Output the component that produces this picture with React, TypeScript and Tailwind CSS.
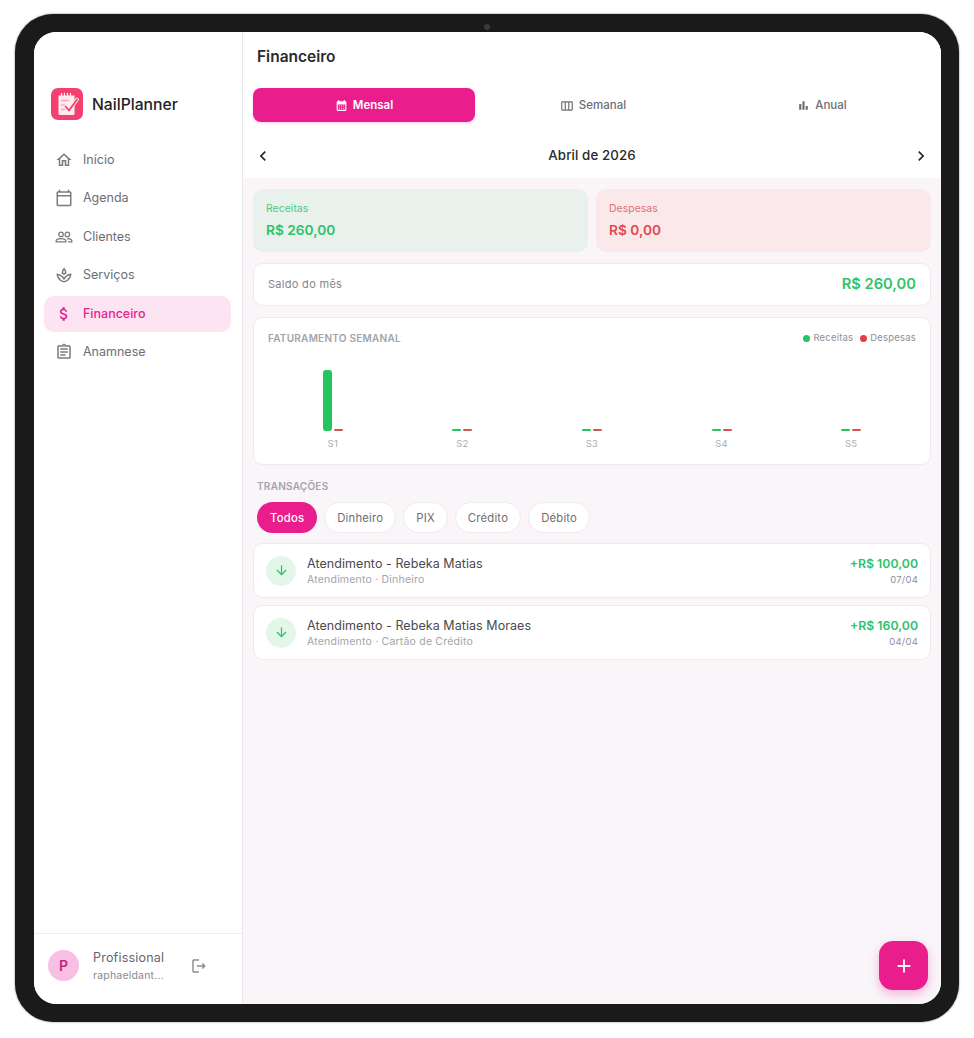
import { MdOutlineHome, MdOutlineCalendarToday, MdOutlineSpa, MdAttachMoney, MdOutlineAssignment, MdOutlineLogout, MdChevronLeft, MdChevronRight, MdCalendarMonth, MdOutlineViewWeek, MdBarChart, MdArrowDownward, MdAdd } from "react-icons/md";

function TwoPeople({ size, className }: { size: number; className?: string }) {
  return (
    <svg width={size} height={size} viewBox="0 0 24 24" fill="none" stroke="currentColor" strokeWidth="1.7" strokeLinejoin="round" className={className}>
      <circle cx="8" cy="8.5" r="3" />
      <circle cx="16.5" cy="8.5" r="3" />
      <path d="M1.5 18.5v-1c0-2 3-3.2 6.5-3.2s6.5 1.2 6.5 3.2v1z" />
      <path d="M16 14.3c3.500 0 6.500 1.200 6.500 3.200v1h-5" />
    </svg>
  );
}

const nav = [
  { label: "Início", Icon: MdOutlineHome },
  { label: "Agenda", Icon: MdOutlineCalendarToday },
  { label: "Clientes", Icon: TwoPeople },
  { label: "Serviços", Icon: MdOutlineSpa },
  { label: "Financeiro", Icon: MdAttachMoney, active: true },
  { label: "Anamnese", Icon: MdOutlineAssignment },
];

const chips = ["Todos", "Dinheiro", "PIX", "Crédito", "Débito"];

const weeks = [
  { label: "S1", h: 61 },
  { label: "S2", h: 2 },
  { label: "S3", h: 2 },
  { label: "S4", h: 2 },
  { label: "S5", h: 2 },
];

const rows = [
  { title: "Atendimento - Rebeka Matias", sub: "Atendimento · Dinheiro", value: "+R$ 100,00", date: "07/04" },
  { title: "Atendimento - Rebeka Matias Moraes", sub: "Atendimento · Cartão de Crédito", value: "+R$ 160,00", date: "04/04" },
];

function Logo() {
  return (
    <svg width="32" height="32" viewBox="0 0 32 32" className="shrink-0">
      <rect width="32" height="32" rx="7" fill="#f4406f" />
      <path d="M7.500 7.500h16V25.500a1.500 1.500 0 0 1-1.500 1.500H9a1.500 1.500 0 0 1-1.500-1.500z" fill="#fdebf0" />
      <path d="M10.500 5.500v3.500M13.500 5.500v3.500M16.500 5.500v3.500M19.500 5.500v3.500" stroke="#fdebf0" strokeWidth="1.300" strokeLinecap="round" />
      <path d="M10.500 12.500h7M10.500 17h3M10.500 21.500h3" stroke="#f8a5ba" strokeWidth="1.500" strokeLinecap="round" />
      <path d="M14.500 18.500l3.500 4 8-11" stroke="#fdebf0" strokeWidth="3.800" fill="none" strokeLinecap="round" strokeLinejoin="round" />
      <path d="M14.500 18.500l3.500 4 8-11" stroke="#f4406f" strokeWidth="1.800" fill="none" strokeLinecap="round" strokeLinejoin="round" />
    </svg>
  );
}

export default function App() {
  return (
    <div className="w-[974px] h-[1038px] bg-white pl-[15px] pt-[14px] font-['Inter',sans-serif]">
      <div className="relative w-[944px] h-[1008px] bg-[#1a1a1a] rounded-[38px] pl-[19px] pr-[18px] pt-[18px] pb-[18px] shadow-[0_0_2px_rgba(0,0,0,0.6)]">
        <div className="absolute top-[10px] left-[469px] w-[6px] h-[6px] rounded-full bg-[#3a3a3a]" />
        <div className="flex w-full h-full rounded-[22px] overflow-hidden bg-white">
          <aside className="w-[209px] shrink-0 flex flex-col border-r border-[#e9e9ec] bg-white">
            <div className="flex items-center gap-[9px] pl-[17px] pt-[56px]">
              <Logo />
              <span className="text-[15.7px] font-medium text-[#222226] leading-none pt-[1px]">NailPlanner</span>
            </div>
            <nav className="flex flex-col gap-[3px] pl-[10px] pr-[11px] pt-[22px]">
              {nav.map(({ label, Icon, active }) => (
                <div key={label} className={`flex items-center h-[35.500px] rounded-[10px] pl-[11px] gap-[10px] ${active ? "bg-[#fce4f3] text-[#e91e8c] font-medium" : "text-[#6d6d75]"}`}>
                  <Icon size={18} className={active ? "shrink-0" : "shrink-0 text-[#7a7a82]"} />
                  <span className="text-[12.500px] pt-[1px]">{label}</span>
                </div>
              ))}
            </nav>
            <div className="mt-auto h-[71px] border-t border-[#ececef] flex items-center pl-[14px] pb-[7px] gap-[14px]">
              <div className="w-[31px] h-[31px] rounded-full bg-[#f7bfe2] flex items-center justify-center text-[#c2277f] text-[14px] font-semibold">P</div>
              <div className="w-[72px]">
                <div className="text-[12.500px] text-[#66666e] leading-[17px] tracking-[0.2px] whitespace-nowrap">Profissional</div>
                <div className="text-[10.500px] text-[#8a8a92] leading-[15px] mt-[2px] tracking-[0.2px] whitespace-nowrap">raphaeldant...</div>
              </div>
              <MdOutlineLogout size={18} className="text-[#8f8f97] ml-[11px]" />
            </div>
          </aside>
          <main className="relative flex-1 flex flex-col bg-[#f9f5f9] min-w-0">
            <div className="bg-white h-[146px] shrink-0 flex flex-col">
              <div className="h-[50px] pl-[14px] flex items-center shrink-0">
                <h1 className="text-[15.500px] font-semibold text-[#2a2a2e]">Financeiro</h1>
              </div>
              <div className="flex gap-[7px] pl-[10px] mt-[6px] h-[34px] shrink-0">
                <div className="w-[222px] shrink-0 rounded-[8px] bg-[#e91e8c] text-white flex items-center justify-center gap-[5px] text-[11.500px] font-semibold pt-[1px] shadow-[0_1px_3px_rgba(233,30,140,0.25)]">
                  <MdCalendarMonth size={13} /> Mensal
                </div>
                <div className="w-[222px] shrink-0 text-[#6d6d75] flex items-center justify-center gap-[5px] text-[11.500px] font-medium pt-[1px]">
                  <MdOutlineViewWeek size={14} /> Semanal
                </div>
                <div className="w-[222px] shrink-0 text-[#6d6d75] flex items-center justify-center gap-[5px] text-[11.500px] font-medium pt-[1px]">
                  <MdBarChart size={13} /> Anual
                </div>
              </div>
              <div className="flex items-center justify-between pl-[10px] pr-[10px] flex-1 pt-[12px] text-[#2a2a2e]">
                <MdChevronLeft size={20} />
                <span className="text-[13.300px] font-medium tracking-[0.1px]">Abril de 2026</span>
                <MdChevronRight size={20} />
              </div>
            </div>

            <div className="px-[10px] pt-[11px] flex flex-col">
              <div className="flex gap-[8px] h-[63px]">
                <div className="flex-1 rounded-[10px] bg-[#e8f1ec] pl-[13px] pt-[12px]">
                  <div className="text-[10.500px] leading-[15px] text-[#4fc97f]">Receitas</div>
                  <div className="text-[13.700px] leading-[20px] mt-[4px] font-semibold text-[#2fc268]">R$ 260,00</div>
                </div>
                <div className="flex-1 rounded-[10px] bg-[#fae8ea] pl-[13px] pt-[12px]">
                  <div className="text-[10.500px] leading-[15px] text-[#e0707a]">Despesas</div>
                  <div className="text-[13.700px] leading-[20px] mt-[4px] font-semibold text-[#e5484d]">R$ 0,00</div>
                </div>
              </div>

              <div className="mt-[11px] h-[43px] rounded-[10px] bg-white border border-[#ececf0] flex items-center justify-between pl-[14px] pr-[14px]">
                <span className="text-[11px] text-[#85858d] tracking-[0.3px]">Saldo do mês</span>
                <span className="text-[14.700px] font-semibold text-[#2fc268]">R$ 260,00</span>
              </div>

              <div className="mt-[11px] h-[148px] rounded-[10px] bg-white border border-[#ececf0] px-[14px] pt-[14px] flex flex-col">
                <div className="flex items-center justify-between h-[13px]">
                  <span className="text-[10px] font-semibold text-[#a3a3aa] tracking-[0.25px]">FATURAMENTO SEMANAL</span>
                  <div className="flex items-center text-[9.500px] text-[#8f8f97] tracking-[0.2px]">
                    <span className="w-[7px] h-[7px] rounded-full bg-[#22c55e] mr-[3px]" />
                    <span>Receitas</span>
                    <span className="w-[7px] h-[7px] rounded-full bg-[#e53e3e] ml-[7px] mr-[3px]" />
                    <span>Despesas</span>
                  </div>
                </div>
                <div className="flex flex-1 pt-[12px]">
                  {weeks.map((w) => (
                    <div key={w.label} className="flex-1 flex flex-col items-center">
                      <div className="h-[74px] flex items-end gap-[2px] shrink-0">
                        <div className="w-[9px] bg-[#22c55e] rounded-[3px]" style={{ height: w.h }} />
                        <div className="w-[9px] h-[2px] bg-[#d9534f] rounded-[1px]" />
                      </div>
                      <span className="text-[9.500px] text-[#acacb3] mt-[6px] leading-[13px] tracking-[0.2px]">{w.label}</span>
                    </div>
                  ))}
                </div>
              </div>

              <div className="mt-[14px] pl-[4px] text-[10px] font-semibold text-[#a3a3aa] tracking-[0.25px] leading-[14px]">TRANSAÇÕES</div>

              <div className="mt-[9px] flex gap-[7px] pl-[4px] h-[31px]">
                {chips.map((c, i) => (
                  <div key={c} className={`rounded-full flex items-center text-[11.300px] pt-[1px] tracking-[0.2px] ${i === 0 ? "bg-[#e91e8c] text-white font-medium px-[13px]" : "bg-white border border-[#ececf0] text-[#6d6d75] px-[12px]"}`}>
                    {c}
                  </div>
                ))}
              </div>

              <div className="mt-[10px] flex flex-col gap-[7px]">
                {rows.map((r) => (
                  <div key={r.title} className="h-[55px] rounded-[10px] bg-white border border-[#ececf0] flex items-center pl-[12px] pr-[12px]">
                    <div className="w-[30px] h-[30px] rounded-full bg-[#e3f6ea] flex items-center justify-center shrink-0">
                      <MdArrowDownward size={15} className="text-[#2fc268]" />
                    </div>
                    <div className="ml-[11px] flex-1">
                      <div className="text-[12.500px] leading-[17px] text-[#4a4a50] tracking-[0.06px]">{r.title}</div>
                      <div className="text-[10.500px] leading-[14px] mt-[1px] text-[#a3a3aa] tracking-[0.2px]">{r.sub}</div>
                    </div>
                    <div className="text-right">
                      <div className="text-[12.300px] leading-[18px] font-semibold text-[#2fc268]">{r.value}</div>
                      <div className="text-[9.500px] leading-[13px] text-[#8f8f97] tracking-[0.2px]">{r.date}</div>
                    </div>
                  </div>
                ))}
              </div>
            </div>

            <div className="absolute right-[13px] bottom-[14px] w-[49px] h-[49px] rounded-[14px] bg-[#e91e8c] flex items-center justify-center text-white shadow-[0_4px_10px_rgba(233,30,140,0.3)]">
              <MdAdd size={22} />
            </div>
          </main>
        </div>
      </div>
    </div>
  );
}
